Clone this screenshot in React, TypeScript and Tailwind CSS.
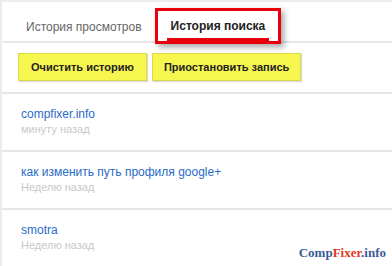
import React from "react"

type itemType = {
  title: string,
  time: string,
}

const items: itemType[] = [
  { title: "compfixer.info", time: "минуту назад" },
  { title: "как изменить путь профиля google+", time: "Неделю назад" },
  { title: "smotra", time: "Неделю назад" },
]

const App = () => {
  return (
    <div className="relative w-[392px] h-[266px] overflow-hidden bg-white border-t-2 border-l-2 border-[#ececec] font-['Liberation_Sans',Arial,sans-serif]">
      {/* tabs */}
      <div className="flex items-start h-[41px] border-b-2 border-[#e6e6e6] ml-[1px]">
        <div className="ml-[23px] mt-[18px] text-[12px] leading-[14px] text-[#666]">История просмотров</div>
        <div className="relative ml-[13px] mt-[6px] h-[36px] border-[3px] border-[#e8000b] bg-white shadow-[3px_3px_6px_rgba(0,0,0,0.35)] px-[9px] z-10">
          <div className="h-full flex items-center pt-[3px] px-[4px] border-b-[3px] border-[#e8000b] text-[12px] font-bold text-[#222]">
            История поиска
          </div>
        </div>
      </div>

      {/* buttons */}
      <div className="flex gap-[5px] pl-[16px] pt-[10px] pb-[11px] border-b-2 border-[#e6e6e6]">
        <button className="h-[28px] px-[12px] bg-[#f6f64e] border border-[#d9d94c] shadow-[1px_1px_1px_rgba(0,0,0,0.15)] text-[11px] font-bold text-[#222]">
          Очистить историю
        </button>
        <button className="h-[28px] px-[11px] bg-[#f6f64e] border border-[#d9d94c] shadow-[1px_1px_1px_rgba(0,0,0,0.15)] text-[11px] font-bold text-[#222]">
          Приостановить запись
        </button>
      </div>

      {/* history list */}
      {items.map((item, i) => (
        <div key={i} className="h-[58px] pl-[19px] pt-[13px] border-b-2 border-[#e6e6e6]">
          <div className="text-[12px] leading-[15px] text-[#2a6bc6]">{item.title}</div>
          <div className="text-[11px] leading-[14px] text-[#c8c8c8]">{item.time}</div>
        </div>
      ))}

      <div className="absolute right-[6px] bottom-[7px] font-['Liberation_Serif',serif] font-bold text-[13px] leading-none text-[#3b5b9b]">
        Comp<span className="text-[#e5371f]">Fixer</span>.info
      </div>
    </div>
  )
}

export default App
